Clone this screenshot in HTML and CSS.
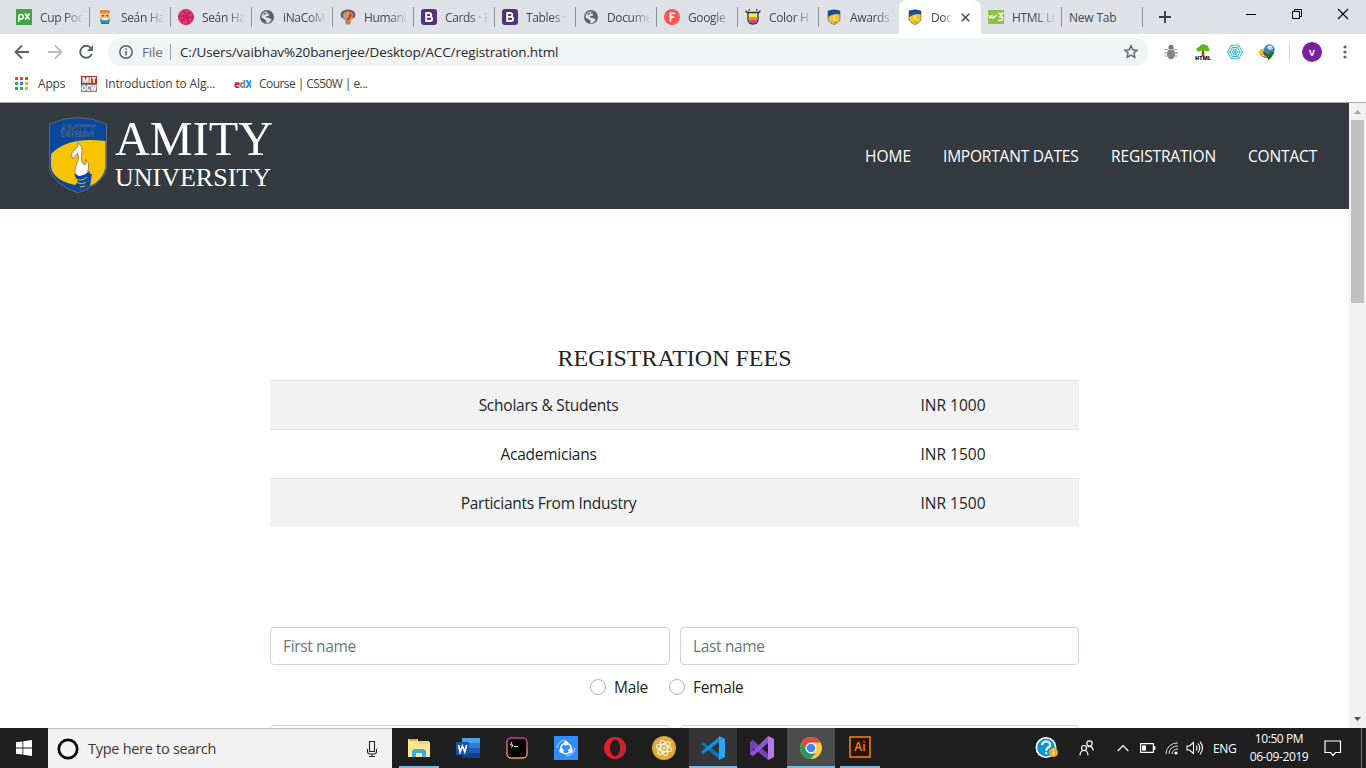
FILE: index.html
```html
<!DOCTYPE html>
<html lang="en">
<head>
<meta charset="utf-8">
<title>Document</title>
<link rel="stylesheet" href="styles.css">
</head>
<body>
<svg class="defs" width="0" height="0">
  <symbol id="globe" viewBox="0 0 16 16"><circle cx="8" cy="8" r="7" fill="#5f6368"/><path d="M3 5.2 5.2 3l3.400-.5-.8 2 2.300.3-.4 2-2.600.4-.3 1.400 2.400.2 2 .9 1.400.2-.8 2-2.300 2.200-2 .3-.2-2.600-1.800-1.500L2.300 8.300Z" fill="#dee1e6"/><path d="m5.300 3.700 2 .3-.6 1.300L4 6.300Z" fill="#5f6368"/></symbol>
  <symbol id="boot" viewBox="0 0 16 16"><rect width="16" height="16" rx="3" fill="#503473"/><path d="M5.200 4H8.600a2 2 0 0 1 .2 3.900H5.200ZM5.200 7.900H9a2.050 2.050 0 0 1 0 4.100H5.200Z" fill="none" stroke="#fff" stroke-width="1.900"/></symbol>
  <symbol id="shield" viewBox="0 0 16 16"><path d="M2 2Q8-.6 14 2V11Q12.500 14 8 15.700 3.500 14 2 11Z" fill="#f4c52a" stroke="#557" stroke-width=".6"/><path d="M2 2Q8-.6 14 2V5.500Q8 4 2 8Z" fill="#174f92"/><path d="M8.200 6.500Q7 8 8.200 9.300T8.500 12" stroke="#fff" stroke-width=".9" fill="none"/><path d="M7.500 12.500h2.600l-1.300 2.300Z" fill="#8a8a58"/></symbol>
</svg>
<header class="tabstrip">
  <div class="tab"><svg width="16" height="16" viewBox="0 0 16 16"><rect width="16" height="16" fill="#43a547"/><path d="M2.800 13V7.200A2.300 2.300 0 1 1 5.200 10H3.500M9 4.500l4.500 6M13.500 4.500 9 10.500" fill="none" stroke="#fff" stroke-width="1.500"/></svg><span class="title">Cup Pod</span></div>
  <div class="tab"><svg width="16" height="16" viewBox="0 0 16 16"><path d="M3 2h10v8H3Z" fill="#f6bd83"/><path d="M3 1h9l1 1v2H3Z" fill="#e5843b"/><path d="M5 6h1.500v1.500H5ZM9.500 6H11v1.500H9.500Z" fill="#445"/><path d="M3 10l3 1h4l3-1v3H3Z" fill="#36a5a8"/><path d="M4 13h8v2H4Z" fill="#2977ad"/><path d="M5.500 9h5v2h-5Z" fill="#eee"/></svg><span class="title">Seán Ha</span></div>
  <div class="tab"><svg width="16" height="16" viewBox="0 0 16 16"><circle cx="8" cy="8" r="7.600" fill="#e23571" stroke="#b81e55" stroke-width=".8"/><path d="M1 7q8 1 11-4M5 1.500Q10 7 10.500 14.500M3 13Q6 7 15 8.500" fill="none" stroke="#b0154d" stroke-width="1.100"/></svg><span class="title">Seán Ha</span></div>
  <div class="tab"><svg width="16" height="16"><use href="#globe"/></svg><span class="title">iNaCoM</span></div>
  <div class="tab"><svg width="16" height="16" viewBox="0 0 16 16"><path d="M1 8Q-.2 3 3.500 1.800Q8-1 12.500 1.800Q16.200 3 15 8L13 9.500H3Z" fill="#65506f"/><path d="M2 6Q8 0 14 6" fill="none" stroke="#bd9279"/><circle cx="8" cy="7.500" r="5" fill="#ef7d3d"/><path d="M8.500 4 8 11l3-6" fill="none" stroke="#c9281f" stroke-width="1.500"/><path d="M4.300 5.500l2 4.500" stroke="#62c2e8" stroke-width="2"/><path d="M8 3.500v5" stroke="#f4d03a" stroke-width="1.200"/><path d="M5 12h6l-1 3.500H6Z" fill="#a98652"/></svg><span class="title">Humani</span></div>
  <div class="tab"><svg width="16" height="16"><use href="#boot"/></svg><span class="title">Cards · B</span></div>
  <div class="tab"><svg width="16" height="16"><use href="#boot"/></svg><span class="title">Tables ·</span></div>
  <div class="tab"><svg width="16" height="16"><use href="#globe"/></svg><span class="title">Docume</span></div>
  <div class="tab"><svg width="16" height="16" viewBox="0 0 16 16"><circle cx="8" cy="8" r="8" fill="#ff5252"/><path d="M6.500 12.500V4.300h4.500M6.500 8.200h3.800" fill="none" stroke="#fff" stroke-width="1.700"/></svg><span class="title">Google</span></div>
  <div class="tab"><svg width="16" height="16" viewBox="0 0 16 16"><path d="M3 3.500h10V10q0 5-5 5t-5-5Z" fill="#f9ec3d" stroke="#2a2e4f" stroke-width="1.300"/><path d="M3.700 8h8.600v2.500H3.700Z" fill="#f78642"/><path d="M3.800 10.500h8.400Q12 14.300 8 14.300t-4.200-3.800Z" fill="#d94792"/><path d="M1 1.500q0 2 2 2M15 1.500q0 2-2 2M3.500 1h1.500M11 1h1.500" fill="none" stroke="#2a2e4f" stroke-width="1.400"/></svg><span class="title">Color H</span></div>
  <div class="tab last-before"><svg width="16" height="16"><use href="#shield"/></svg><span class="title">Awards</span></div>
  <div class="tab active"><svg width="16" height="16"><use href="#shield"/></svg><span class="title short">Doc</span><svg class="close" width="9" height="9" viewBox="0 0 9 9"><path d="m.7.7 7.600 7.600M8.300.7.700 8.300" stroke="#505357" stroke-width="1.600"/></svg></div>
  <div class="tab"><svg width="16" height="16" viewBox="0 0 16 16"><rect y="1" width="16" height="14" fill="#8bc53f"/><path d="M1 6q.5 4 2 2.500L4 7q.5 3 2 1.500L8.500 6M10 4.500h4.500L12 7.500q3 0 2.500 2.300t-4.500 1.500" fill="none" stroke="#fff" stroke-width="1.500"/></svg><span class="title">HTML Li</span></div>
  <div class="tab"><span class="title plain">New Tab</span></div>
  <svg class="plus" width="12" height="12" viewBox="0 0 12 12"><path d="M6 0v12M0 6h12" stroke="#3c4043" stroke-width="1.900"/></svg>
  <div class="window-buttons">
    <svg width="12" height="12" viewBox="0 0 12 12"><path d="M1 6.500h10" stroke="#000"/></svg>
    <svg width="12" height="12" viewBox="0 0 12 12"><path d="M1.500 3.500h7v7h-7ZM3.500 3.500v-2h7v7h-2" fill="none" stroke="#000"/></svg>
    <svg width="12" height="12" viewBox="0 0 12 12"><path d="m1 1 10 10M11 1 1 11" stroke="#000" stroke-width="1.100"/></svg>
  </div>
</header>
<div class="toolbar">
  <svg class="back" width="16" height="16" viewBox="0 0 16 16"><path d="M15 8H2M8 1.500 1.500 8 8 14.500" fill="none" stroke="#5f6368" stroke-width="1.900"/></svg>
  <svg class="forward" width="16" height="16" viewBox="0 0 16 16"><path d="M1 8h13M8 1.500 14.500 8 8 14.500" fill="none" stroke="#bbbdbf" stroke-width="1.900"/></svg>
  <svg class="reload" width="16" height="16" viewBox="0 0 16 16"><path d="M13 4.200A6 6 0 1 0 13.800 10" fill="none" stroke="#5f6368" stroke-width="1.900"/><path d="M15 1v6H9Z" fill="#5f6368"/></svg>
  <div class="omnibox">
    <svg width="14" height="14" viewBox="0 0 14 14"><circle cx="7" cy="7" r="6.200" fill="none" stroke="#5f6368" stroke-width="1.500"/><path d="M7 6v4.500M7 3.300v1.500" stroke="#5f6368" stroke-width="1.500"/></svg>
    <span class="scheme">File</span><span class="divider"></span><span class="url">C:/Users/vaibhav%20banerjee/Desktop/ACC/registration.html</span>
    <svg class="star" width="16" height="16" viewBox="0 0 16 16"><path d="m8 1.800 1.800 4 4.300.4-3.200 2.900.9 4.300L8 11.200l-3.800 2.200.9-4.300-3.200-2.900 4.300-.4Z" fill="none" stroke="#5f6368" stroke-width="1.400"/></svg>
  </div>
  <div class="extensions">
    <svg width="16" height="16" viewBox="0 0 16 16"><path d="M5 5.500H1.500M11 5.500h3.500M4 8.800H1M12 8.800h3M4.500 12H1.500M11.500 12h3" stroke="#999" stroke-width="1.200"/><ellipse cx="8" cy="10" rx="4" ry="5.300" fill="#858585"/><path d="M5.500 5V3.200a2.500 2.500 0 0 1 5 0V5Z" fill="#777"/><path d="M4.500 5.700h7" stroke="#ccc" stroke-width=".8"/></svg>
    <svg width="16" height="16" viewBox="0 0 16 16"><path d="M7 6h2l.5 6h-3Z" fill="#9d4c18"/><path d="M2 7Q0 4.500 4 3 6-.8 10.500.8 14 2 13.500 4 16 7 12 7.500L8 6 4 7.500Z" fill="#58ba13"/><text x="8" y="16" text-anchor="middle" class="html-tag" textLength="16">HTML</text></svg>
    <svg width="16" height="16" viewBox="0 0 16 16"><g fill="none" stroke="#35b5cb"><path d="M4.300 1.200h7.400L15.500 8l-3.800 6.800H4.300L.5 8ZM5.500 3.500h5L13 8l-2.500 4.500h-5L3 8ZM6.700 5.800h2.600L10.600 8 9.300 10.200H6.700L5.400 8Z"/><path d="m4.300 1.200 7.400 13.600M11.700 1.200 4.300 14.800M.5 8h15" stroke-width=".7"/></g></svg>
    <svg width="16" height="16" viewBox="0 0 16 16"><ellipse cx="5" cy="8" rx="5" ry="3.500" fill="#f0bd21"/><path d="M0 8q3 6 11 4l-2 2Q2 14 0 8Z" fill="#d93c2a"/><circle cx="10.300" cy="5.700" r="5.400" fill="#487dbb"/><path d="M8 3q2-3 5-1l1 3-3 1-2-1Z" fill="#c9dff0"/><path d="M4 7l5 3.500 4-3 2 1.500-3 5-3 2.500-.5-3.500Q4 12 4 7Z" fill="#16751d"/></svg>
  </div>
  <span class="toolbar-rule"></span>
  <span class="avatar">v</span>
  <svg class="menu" width="4" height="14" viewBox="0 0 4 14"><circle cx="2" cy="2" r="1.600" fill="#5f6368"/><circle cx="2" cy="7" r="1.600" fill="#5f6368"/><circle cx="2" cy="12" r="1.600" fill="#5f6368"/></svg>
</div>
<div class="bookmarks">
  <svg width="13" height="13" viewBox="0 0 13 13"><path d="M0 0h3v3H0ZM5 0h3v3H5ZM10 0h3v3h-3Z" fill="#ea4335"/><path d="M0 5h3v3H0ZM0 10h3v3H0ZM5 10h3v3H5Z" fill="#34a853"/><path d="M5 5h3v3H5Z" fill="#2684fc"/><path d="M10 5h3v3h-3ZM10 10h3v3h-3Z" fill="#fbac05"/></svg>
  <span class="bm-apps">Apps</span>
  <svg class="mit" width="16" height="16" viewBox="0 0 16 16"><rect width="16" height="8" fill="#b12a2b"/><rect y="8" width="16" height="8" fill="#85857a"/><text x="8" y="7" text-anchor="middle" class="mit-text" textLength="14" lengthAdjust="spacingAndGlyphs">MIT</text><text x="8" y="15" text-anchor="middle" class="mit-text" textLength="15" lengthAdjust="spacingAndGlyphs">OCW</text></svg>
  <span class="bm-mit">Introduction to Alg...</span>
  <svg class="edx" width="17" height="16" viewBox="0 0 17 16"><text x="0" y="12" class="edx-text" fill="#b72667">e<tspan fill="#898c8e">d</tspan><tspan fill="#1f91e3">X</tspan></text></svg>
  <span class="bm-edx">Course | CS50W | e...</span>
</div>
<div class="viewport">
  <main class="page">
    <nav class="navbar">
      <svg class="crest" width="60" height="78" viewBox="0 0 60 78"><path d="M1.500 8Q30-5 58.500 8V53Q55 68 30 77 5 68 1.500 53Z" fill="#0b479d" stroke="#5d6b75" stroke-width="1"/><path d="M3 38Q20 20 57.500 25V52Q54 65 42 70L44 58H27L31 70Q5 65 3 51Z" fill="#f8c300"/><text x="30" y="15.500" text-anchor="middle" class="crest-name" textLength="35" lengthAdjust="spacingAndGlyphs">AMITY</text><text x="30" y="21" text-anchor="middle" class="crest-sub" textLength="33" lengthAdjust="spacingAndGlyphs">UNIVERSITY</text><path d="M30 26Q35 31 34 36 33 40 33.500 44 34 48 37 49 39.500 46 37.500 43 42 47 40.500 53 39 60 33 61 27 60 27 54 27.500 49 30 45 31.500 41 29.500 37L25 43Q21.500 37 27 33.500 31 31 30 26Z" fill="#fff" stroke="#7d755d" stroke-width=".8"/><path d="M26 58Q32 63 42 55L41 69 31 76 27 69 30 66Z" fill="#0b479d"/><path d="M28 63q6 3 11-2M30 67q4 2 8-1M32 71l5-1" fill="none" stroke="#e5bd20" stroke-width="1"/></svg>
      <div class="brand"><div class="brand-name">AMITY</div><div class="brand-sub">UNIVERSITY</div></div>
      <div class="links"><a class="l1">HOME</a><a class="l2">IMPORTANT DATES</a><a class="l3">REGISTRATION</a><a class="l4">CONTACT</a></div>
    </nav>
    <section class="fees">
      <h4>REGISTRATION FEES</h4>
      <div class="row"><span class="kind">Scholars &amp; Students</span><span class="fee">INR 1000</span></div>
      <div class="row"><span class="kind">Academicians</span><span class="fee">INR 1500</span></div>
      <div class="row"><span class="kind">Particiants From Industry</span><span class="fee">INR 1500</span></div>
    </section>
    <form class="form">
      <div class="fields"><div class="field">First name</div><div class="field">Last name</div></div>
      <div class="radios"><span class="radio"></span><span class="male">Male</span><span class="radio"></span><span class="female">Female</span></div>
      <div class="fields"><div class="field"></div><div class="field"></div></div>
    </form>
  </main>
  <div class="scrollbar"><svg width="7" height="4" viewBox="0 0 7 4"><path d="M0 4 3.500 0 7 4Z" fill="#a3a3a3"/></svg><div class="thumb"></div><svg class="down" width="7" height="4" viewBox="0 0 7 4"><path d="M0 0h7L3.500 4Z" fill="#505050"/></svg></div>
</div>
<footer class="taskbar">
  <div class="start"><svg width="16" height="16" viewBox="0 0 16 16"><path d="M0 2.300 6.500 1.400V7.500H0ZM7.300 1.300 16 0V7.500H7.300ZM0 8.400H6.500v6.200L0 13.700ZM7.300 8.400H16V16L7.300 14.700Z" fill="#fff"/></svg></div>
  <div class="search"><svg width="22" height="22" viewBox="0 0 22 22"><circle cx="11" cy="11" r="9.200" fill="none" stroke="#050505" stroke-width="2.700"/></svg><span class="search-text">Type here to search</span><svg class="mic" width="12" height="18" viewBox="0 0 12 18"><path d="M3.500 1.500h5v10h-5ZM1.500 9v2.500q0 2.500 2.500 2.500h4q2.500 0 2.500-2.500V9M6 14v2.500M3 16.500h6" fill="none" stroke="#222" stroke-width="1.100"/></svg></div>
  <div class="apps">
    <div class="app open"><svg width="22" height="20" viewBox="0 0 22 20"><path d="M0 1h10v3h12v15H0Z" fill="#ffe794"/><path d="M1 1h8v2H1Z" fill="#e5ae3c"/><path d="M10 3h11v3H10Z" fill="#f4d477"/><path d="M4 19v-6l2-2h10l2 2v6h-4v-4H8v4Z" fill="#37afe4"/></svg></div>
    <div class="app"><svg width="24" height="22" viewBox="0 0 24 22"><path d="M6 1h18v5H6Z" fill="#41a5ee"/><path d="M6 6h18v5H6Z" fill="#2b7cd3"/><path d="M6 11h18v5H6Z" fill="#185abd"/><path d="M6 16h18v5H6Z" fill="#103f91"/><rect y="5" width="13" height="13" rx="1" fill="#1d52a2"/><path d="m2.500 8 1.600 7 2.300-6 2.400 6 1.800-7" fill="none" stroke="#fff" stroke-width="1.600"/></svg></div>
    <div class="app"><svg width="22" height="22" viewBox="0 0 22 22"><defs><linearGradient id="hyper" x1="0" y1="0" x2="0" y2="1"><stop stop-color="#d1389d"/><stop offset="1" stop-color="#e9a43d"/></linearGradient></defs><rect x="1" y="1" width="20" height="20" rx="4" fill="#000" stroke="url(#hyper)" stroke-width="1.500"/><path d="M6 5 4.500 8H7L5.500 10.500M8 9.500h4" fill="none" stroke="#fff"/></svg></div>
    <div class="app"><svg width="24" height="24" viewBox="0 0 24 24"><rect width="24" height="24" fill="#318cff"/><circle cx="12" cy="12.500" r="5.200" fill="none" stroke="#fff" stroke-width="1.500"/><g fill="#fff"><circle cx="12" cy="7.200" r="2.300"/><circle cx="7.500" cy="14.800" r="2.300"/><circle cx="16.500" cy="14.800" r="2.300"/></g><path d="M3 12a9 9 0 0 1 9-8M21 12a9 9 0 0 1-9 8" fill="none" stroke="#b9dbff"/></svg></div>
    <div class="app"><svg width="22" height="22" viewBox="0 0 22 22"><ellipse cx="11" cy="11" rx="11" ry="11" fill="#e91d2f"/><path d="M14 1Q22 4 22 11t-8 10Z" fill="#c52631"/><ellipse cx="11" cy="11" rx="5" ry="8.500" fill="#1f1f1f"/></svg></div>
    <div class="app"><svg width="24" height="24" viewBox="0 0 24 24"><circle cx="12" cy="12" r="12" fill="#e0aa3b"/><g fill="none" stroke="#fff8e5" stroke-width="1.100"><ellipse cx="12" cy="12" rx="3.300" ry="8" transform="rotate(-15 12 12)"/><ellipse cx="12" cy="12" rx="3.300" ry="8" transform="rotate(45 12 12)"/><ellipse cx="12" cy="12" rx="3.300" ry="8" transform="rotate(105 12 12)"/></g><circle cx="12" cy="12" r="1.300" fill="#fff"/></svg></div>
    <div class="app open wide vscode"><svg width="24" height="24" viewBox="0 0 24 24"><path d="m0 8 2-2 16 12v5Z" fill="#0b78c4"/><path d="m0 16 2 2L18 6V1Z" fill="#168dd9"/><path d="m18 0 6 3v18l-6 3Z" fill="#29a7f2"/></svg></div>
    <div class="app"><svg width="24" height="24" viewBox="0 0 24 24"><path d="m0 6 3-2 15 14v6L3 12v7L0 18Z" fill="#7740b6"/><path d="M3 20 0 18l3-3L18 0v7Z" fill="#8b55ce"/><path d="m18 0 6 3v18l-6 3Z" fill="#b47aec"/></svg></div>
    <div class="app open wide chrome"><svg width="22" height="22" viewBox="0 0 22 22"><circle cx="11" cy="11" r="11" fill="#fbcb43"/><path d="M1.500 5.500A11 11 0 0 1 20.500 5.500H11L6.200 13.800Z" fill="#df4b3f"/><path d="M1.500 5.500 6.200 13.800 11 16.500h4.500L10.500 22A11 11 0 0 1 1.500 5.500Z" fill="#229b5b"/><circle cx="11" cy="11" r="5.500" fill="#fff"/><circle cx="11" cy="11" r="4.300" fill="#4285f4"/></svg></div>
    <div class="app open"><svg class="ai" width="22" height="22" viewBox="0 0 22 22"><rect x="1" y="1" width="20" height="20" fill="#291200" stroke="#ed7e17" stroke-width="1.600"/><text x="11" y="15" text-anchor="middle" class="ai-text">Ai</text></svg></div>
  </div>
  <div class="tray">
    <svg class="help" width="24" height="22" viewBox="0 0 24 22"><circle cx="11" cy="10.500" r="9.700" fill="#0796d3" stroke="#fff" stroke-width="1.600"/><path d="M7.200 8q.3-3.500 4-3.500t4 3q0 1.800-2.300 3.200-1.700 1-1.700 3M11.200 15v2.200" fill="none" stroke="#fff" stroke-width="2.200"/><circle cx="18.500" cy="15.500" r="4.500" fill="#f5a51c"/><path d="M18.500 14.500v3.500M18.500 12.500v1.200" stroke="#fff" stroke-width="1.400"/></svg>
    <svg class="people" width="16" height="16" viewBox="0 0 16 16"><g fill="none" stroke="#fff" stroke-width="1.200"><circle cx="5" cy="8" r="2.500"/><path d="M1 15.500q0-5 4-5t4 5"/><circle cx="10.500" cy="3.500" r="2.700"/><path d="M8.500 7q5-2 5.800 3.500"/></g></svg>
    <svg class="chevron" width="12" height="8" viewBox="0 0 12 8"><path d="m.7 7 5.300-5.500L11.300 7" fill="none" stroke="#fff" stroke-width="1.200"/></svg>
    <svg class="battery" width="16" height="10" viewBox="0 0 16 10"><path d="M.6.600h12.800v8.800H.6Z" fill="none" stroke="#fff" stroke-width="1.200"/><path d="M2 2.500h4v5H2ZM14 3h1.300v4H14Z" fill="#fff"/></svg>
    <svg class="wifi" width="14" height="13" viewBox="0 0 14 13"><g fill="none" stroke="#ddd"><path d="M1 12A11 11 0 0 1 13 1"/><path d="M4 12A8 8 0 0 1 13 4"/><path d="M7 12A5.500 5.500 0 0 1 13 7"/></g><circle cx="11" cy="11" r="1.600" fill="#fff"/></svg>
    <svg class="volume" width="18" height="14" viewBox="0 0 18 14"><path d="M1 5h2.500l4-3.500v11L3.500 9H1ZM10 4.500q2 2.500 0 5M12 2.500q3.500 4.500 0 9M14 .7q5 6.300 0 12.600" fill="none" stroke="#fff" stroke-width="1.100"/></svg>
    <span class="lang">ENG</span>
    <div class="clock"><span class="time">10:50 PM</span><span class="date">06-09-2019</span></div>
    <svg class="notice" width="18" height="17" viewBox="0 0 18 17"><path d="M1 1h15.500v11.500h-5L9 15.500 6.500 12.500H1Z" fill="none" stroke="#fff" stroke-width="1.200"/></svg>
    <span class="show-desktop"></span>
  </div>
</footer>
</body>
</html>
```
FILE: styles.css
```css
* { box-sizing: border-box; }
body { margin: 0; width: 1366px; height: 768px; overflow: hidden; display: flex; flex-direction: column; background: #fff; font-family: "Open Sans", "Noto Sans", sans-serif; white-space: nowrap; }
svg { display: block; flex: none; }
.defs { position: absolute; }

.tabstrip { height: 34px; background: #dee1e6; display: flex; align-items: center; padding-left: 9px; font-size: 12px; color: #45494d; }
.tab { width: 81px; height: 20px; flex: none; display: flex; align-items: center; padding-left: 7px; border-right: 1px solid #8e9196; }
.title { width: 42px; margin-left: 8px; overflow: hidden; letter-spacing: -0.35px; mask-image: linear-gradient(90deg, #000 60%, transparent 105%); }
.title.short { width: 21px; }
.title.plain { width: 60px; margin-left: 0; letter-spacing: -0.2px; mask-image: none; }
.last-before { border-right: 0; }
.tab.active { width: 82px; height: 34px; background: #fff; border: 0; border-radius: 8px 8px 0 0; padding-left: 8px; margin-left: -1px; }
.close { margin-left: 9px; }
.plus { margin-left: 16px; }
.window-buttons { display: flex; gap: 34px; margin: -6px 17px 0 auto; }

.toolbar { height: 36px; display: flex; align-items: center; padding-left: 14px; }
.forward { margin-left: 17px; }
.reload { margin-left: 15px; }
.omnibox { width: 1041px; height: 28px; margin-left: 14px; border-radius: 14px; background: #f1f3f4; display: flex; align-items: center; padding: 0 10px 0 11px; font-size: 13.500px; }
.scheme { width: 21px; margin-left: 9px; color: #6a6e73; letter-spacing: -0.2px; }
.divider { width: 1px; height: 16px; background: #9b9ea3; margin: 0 9px 0 7px; }
.url { color: #26292c; letter-spacing: -0.14px; }
.star { margin-left: auto; }
.extensions { display: flex; gap: 16px; margin-left: 14px; }
.html-tag { font: 900 5.500px "Open Sans", sans-serif; fill: #211; }
.toolbar-rule { width: 1px; height: 16px; background: #d0d2d5; margin-left: 14px; }
.avatar { width: 20px; height: 20px; margin-left: 12px; border-radius: 50%; background: #7b1fa2; color: #fff; font-size: 11px; line-height: 19px; text-align: center; font-weight: 600; }
.menu { margin-left: 21px; }

.bookmarks { height: 33px; display: flex; align-items: center; padding: 0 0 5px 15px; border-bottom: 1px solid #aaa; font-size: 12px; color: #3e4246; }
.bm-apps { width: 27px; margin-left: 10px; letter-spacing: -0.2px; }
.mit { margin-left: 16px; }
.mit-text { font: 900 8px "Open Sans", sans-serif; fill: #fff; }
.bm-mit { width: 110px; margin-left: 8px; letter-spacing: -0.16px; }
.edx { margin-left: 19px; }
.edx-text { font: 800 10px "Open Sans", sans-serif; letter-spacing: -.7px; }
.bm-edx { margin-left: 8px; letter-spacing: -0.57px; }

.viewport { height: 625px; display: flex; }
.page { width: 1349px; overflow: hidden; font-size: 16px; color: #212529; }
.navbar { height: 106px; background: #343a40; display: flex; align-items: center; padding: 0 32px 0 48px; }
.crest { margin-top: -2px; }
.brand { font-family: "Liberation Serif", serif; color: #fff; margin: -4px 0 0 7px; }
.brand-name { font-size: 48.200px; line-height: 48px; }
.brand-sub { font-size: 26px; line-height: 30px; }
.crest-name { font: 700 11px "Liberation Serif", serif; fill: #17396c; stroke: #66798a; stroke-width: .4; }
.crest-sub { font: 700 5.500px "Liberation Serif", serif; fill: #5e7183; }
.links { display: flex; gap: 32px; margin-left: auto; color: #fff; font-size: 15.500px; letter-spacing: -0.15px; }
.l1 { width: 46px; letter-spacing: 0; }
.l2 { width: 136px; letter-spacing: -0.2px; }
.l3 { width: 105px; }
.l4 { width: 69px; }
.fees { width: 809px; margin: 135px 0 0 270px; }
h4 { margin: 0 0 7px; font: 24px/29px "Liberation Serif", serif; text-align: center; }
.row { height: 49px; display: grid; grid-template-columns: 557px 252px; align-items: center; text-align: center; border-top: 1px solid #dee2e6; font-size: 15.500px; }
.row:nth-child(even) { background: #f2f2f2; }
.kind { letter-spacing: -0.25px; }
.form { width: 809px; margin: 100px 0 0 270px; }
.fields { display: grid; grid-template-columns: 400px 399px; gap: 10px; }
.field { height: 38px; border: 1px solid #ced4da; border-radius: 4px; padding: 0 12px; line-height: 36px; color: #6c757d; font-size: 15.500px; letter-spacing: -0.35px; }
.radios { height: 60px; padding: 10px 0 0 320px; display: flex; align-items: flex-start; line-height: 24px; font-size: 15.500px; letter-spacing: -0.3px; }
.radio { width: 16px; height: 16px; margin-top: 4px; border: 1px solid #adb5bd; border-radius: 50%; }
.male { width: 35px; margin: 0 20px 0 8px; }
.female { margin-left: 8px; }
.scrollbar { width: 17px; background: #f1f1f1; display: flex; flex-direction: column; align-items: center; padding: 7px 0; }
.thumb { width: 13px; height: 183px; margin-top: 6px; background: #c1c1c1; }
.down { margin-top: auto; }

.taskbar { height: 40px; background: #1f1f1f; display: flex; color: #fff; }
.start { width: 48px; display: flex; align-items: center; justify-content: center; }
.search { width: 344px; background: #f2f2f2; border-top: 1px solid #bbb; display: flex; align-items: center; padding: 0 14px 0 9px; color: #393939; font-size: 14.500px; }
.search-text { margin-left: 9px; letter-spacing: -0.28px; }
.mic { margin-left: auto; }
.apps { display: flex; gap: 1px; padding-left: 3px; }
.app { width: 48px; height: 40px; display: flex; align-items: center; justify-content: center; }
.app.open { background: linear-gradient(#76b9ed, #76b9ed) 50% 100% / 40px 2px no-repeat; }
.app.open.wide { background-size: 48px 2px; }
.app.vscode { background-color: #353535; }
.app.chrome { background-color: #4d4d4d; }
.ai { margin-top: -2px; }
.ai-text { font: 600 12px "Open Sans", sans-serif; fill: #ee8520; }
.tray { flex: 1; display: flex; align-items: center; padding-left: 151px; font-size: 12px; }
.people { margin-left: 20px; }
.chevron { margin-left: 22px; }
.battery { margin-left: 11px; }
.wifi { margin-left: 9px; }
.volume { margin-left: 7px; }
.lang { width: 24px; margin-left: 9px; letter-spacing: -0.4px; }
.clock { width: 62px; margin-left: 11px; display: flex; flex-direction: column; align-items: center; line-height: 18px; letter-spacing: -0.4px; }
.notice { margin-left: 14px; }
.show-desktop { width: 1px; height: 40px; background: #777; margin: 0 4px 0 auto; }
```
